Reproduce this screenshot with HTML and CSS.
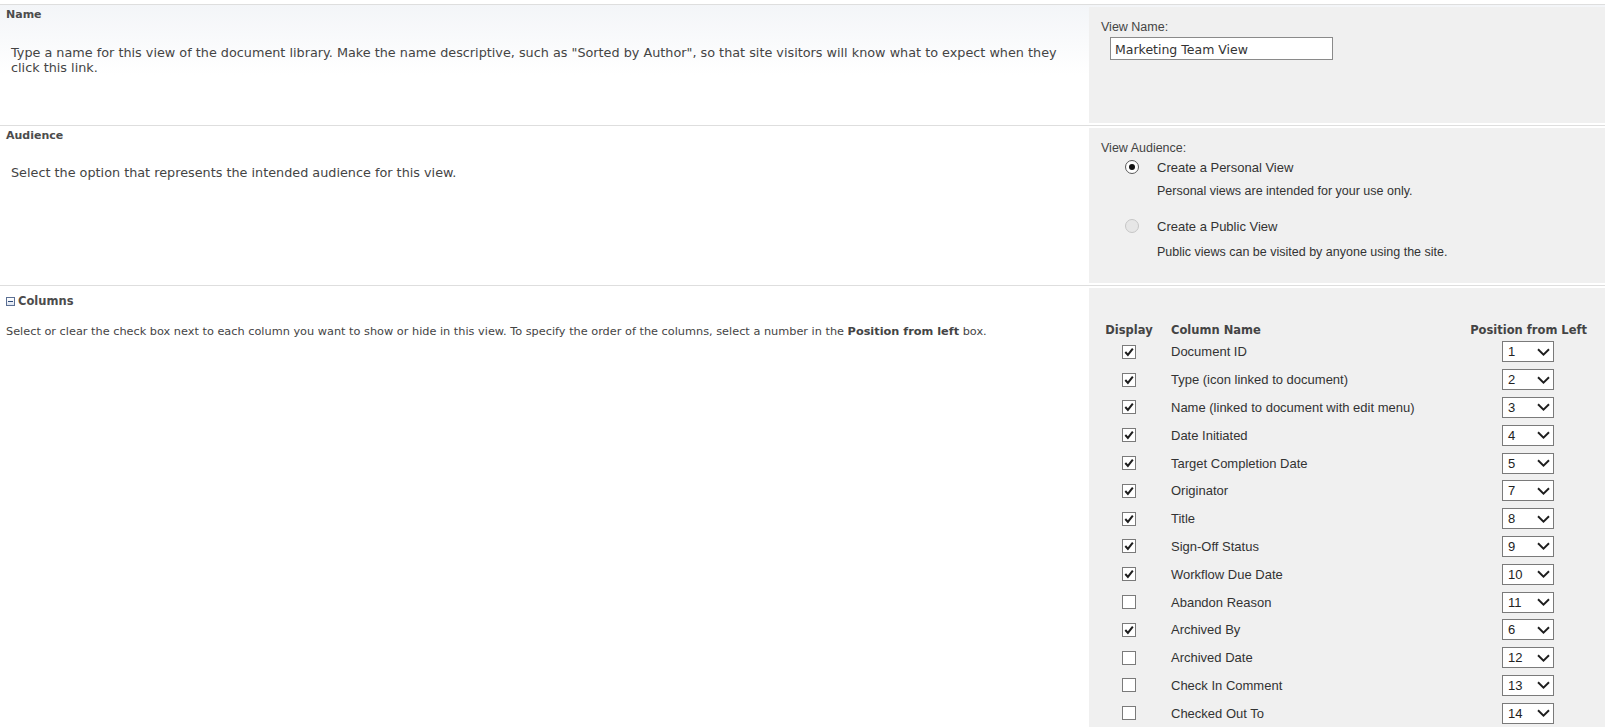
FILE: index.html
```html
<!DOCTYPE html>
<html lang="en">
<head>
    <meta charset="UTF-8">
    <title>Create View</title>
    <link rel="stylesheet" href="styles.css">
</head>
<body>

<div class="page">

    <!-- Name -->
    <div class="section section-first">
        <div class="section-desc">
            <h3 class="section-title">Name</h3>
            <p class="section-text text-name">Type a name for this view of the document library. Make the name descriptive, such as "Sorted by Author", so that site visitors will know what to expect when they click this link.</p>
        </div>
        <div class="section-ctrl ctrl-name">
            <div class="ctrl-label">View Name:</div>
            <input class="text-input" type="text" value="Marketing Team View">
        </div>
    </div>

    <!-- Audience -->
    <div class="section">
        <div class="section-desc">
            <h3 class="section-title">Audience</h3>
            <p class="section-text text-audience">Select the option that represents the intended audience for this view.</p>
        </div>
        <div class="section-ctrl ctrl-audience">
            <div class="ctrl-label">View Audience:</div>
            <div class="option">
                <span class="radio checked"></span>
                <span class="option-label">Create a Personal View</span>
            </div>
            <div class="option-note">Personal views are intended for your use only.</div>
            <div class="option option-second">
                <span class="radio disabled"></span>
                <span class="option-label">Create a Public View</span>
            </div>
            <div class="option-note note-second">Public views can be visited by anyone using the site.</div>
        </div>
    </div>

    <!-- Columns -->
    <div class="section section-last">
        <div class="section-desc">
            <h3 class="section-title title-columns"><span class="collapse-icon"></span>Columns</h3>
            <p class="section-text text-columns">Select or clear the check box next to each column you want to show or hide in this view. To specify the order of the columns, select a number in the <b>Position from left</b> box.</p>
        </div>
        <div class="section-ctrl ctrl-columns">
            <div class="col-grid">
                <div class="col-head head-display">Display</div>
                <div class="col-head head-name">Column Name</div>
                <div class="col-head head-pos">Position from Left</div>

                <div class="cell-check"><span class="check on"></span></div>
                <div class="cell-name">Document ID</div>
                <div class="cell-pos"><span class="pos-select">1</span></div>

                <div class="cell-check"><span class="check on"></span></div>
                <div class="cell-name">Type (icon linked to document)</div>
                <div class="cell-pos"><span class="pos-select">2</span></div>

                <div class="cell-check"><span class="check on"></span></div>
                <div class="cell-name">Name (linked to document with edit menu)</div>
                <div class="cell-pos"><span class="pos-select">3</span></div>

                <div class="cell-check"><span class="check on"></span></div>
                <div class="cell-name">Date Initiated</div>
                <div class="cell-pos"><span class="pos-select">4</span></div>

                <div class="cell-check"><span class="check on"></span></div>
                <div class="cell-name">Target Completion Date</div>
                <div class="cell-pos"><span class="pos-select">5</span></div>

                <div class="cell-check"><span class="check on"></span></div>
                <div class="cell-name">Originator</div>
                <div class="cell-pos"><span class="pos-select">7</span></div>

                <div class="cell-check"><span class="check on"></span></div>
                <div class="cell-name">Title</div>
                <div class="cell-pos"><span class="pos-select">8</span></div>

                <div class="cell-check"><span class="check on"></span></div>
                <div class="cell-name">Sign-Off Status</div>
                <div class="cell-pos"><span class="pos-select">9</span></div>

                <div class="cell-check"><span class="check on"></span></div>
                <div class="cell-name">Workflow Due Date</div>
                <div class="cell-pos"><span class="pos-select">10</span></div>

                <div class="cell-check"><span class="check"></span></div>
                <div class="cell-name">Abandon Reason</div>
                <div class="cell-pos"><span class="pos-select">11</span></div>

                <div class="cell-check"><span class="check on"></span></div>
                <div class="cell-name">Archived By</div>
                <div class="cell-pos"><span class="pos-select">6</span></div>

                <div class="cell-check"><span class="check"></span></div>
                <div class="cell-name">Archived Date</div>
                <div class="cell-pos"><span class="pos-select">12</span></div>

                <div class="cell-check"><span class="check"></span></div>
                <div class="cell-name">Check In Comment</div>
                <div class="cell-pos"><span class="pos-select">13</span></div>

                <div class="cell-check"><span class="check"></span></div>
                <div class="cell-name">Checked Out To</div>
                <div class="cell-pos"><span class="pos-select">14</span></div>
            </div>
        </div>
    </div>

</div>

<script>
    // checkmarks and dropdown arrows are the same everywhere, so add them here
    document.addEventListener('DOMContentLoaded', function () {
        const svgNS = 'http://www.w3.org/2000/svg';

        document.querySelectorAll('.check.on').forEach(box => {
            box.innerHTML = '<svg width="12" height="12" viewBox="0 0 12 12"><path d="M2.3 6 L4.9 8.9 L9.8 2.6" fill="none" stroke="#1e1e1e" stroke-width="2"/></svg>';
        });

        document.querySelectorAll('.pos-select').forEach(sel => {
            const arrow = document.createElementNS(svgNS, 'svg');
            arrow.setAttribute('class', 'pos-arrow');
            arrow.setAttribute('width', '13');
            arrow.setAttribute('height', '8');
            arrow.setAttribute('viewBox', '0 0 13 8');
            arrow.innerHTML = '<path d="M1 1.2 L6.5 6.6 L12 1.2" fill="none" stroke="#1e1e1e" stroke-width="1.9"/>';
            sel.appendChild(arrow);
        });
    });
</script>

</body>
</html>
```

FILE: styles.css
```css
:root {
    --text-color: #444444;
    --title-color: #4c4c4c;
    --ctrl-bg: #f0f0f0;
    --line-color: #dedede;
    --box-border: #7a7a7a;
    --verdana: "DejaVu Sans", Verdana, sans-serif;
    --arial: "Liberation Sans", Arial, sans-serif;
}

body {
    margin: 0;
    background: #ffffff;
    color: var(--text-color);
    font-family: var(--verdana);
}

.page {
    width: 1605px;
    padding-top: 4px;
}

.section {
    display: flex;
    border-top: 1px solid var(--line-color);
}

.section-first {
    background: linear-gradient(#f3f5f8, #ffffff 70px);
}

.section-desc {
    flex: 0 0 1089px;
}

.section-title {
    margin: 0;
    padding: 3px 6px 0;
    font-size: 11px;
    line-height: 14px;
    font-weight: bold;
    color: var(--title-color);
}

.section-text {
    margin: 0;
    font-size: 12.8px;
    line-height: 15px;
}

.text-name {
    margin-top: 23px;
    padding: 0 12px 0 11px;
}

.text-audience {
    margin-top: 22px;
    padding-left: 11px;
}

.title-columns {
    padding-top: 8px;
    font-size: 11.5px;
    display: flex;
    align-items: center;
}

.collapse-icon {
    width: 7px;
    height: 7px;
    border: 1px solid #5b6f93;
    background: linear-gradient(#ffffff, #dfe6f1);
    margin-right: 3px;
    position: relative;
}

.collapse-icon::after {
    content: '';
    position: absolute;
    left: 1px;
    right: 1px;
    top: 3px;
    height: 1px;
    background: #2d4a7a;
}

.text-columns {
    margin-top: 16px;
    padding-left: 6px;
    font-size: 11.3px;
}

.section-ctrl {
    flex: 1;
    background: var(--ctrl-bg);
    margin: 2px 0;
    padding: 13px 10px 0 12px;
    font-family: var(--arial);
    color: #333333;
}

.ctrl-name {
    height: 103px;
}

.ctrl-audience {
    height: 142px;
}

.ctrl-columns {
    margin-bottom: 0;
    padding-top: 35px;
    padding-bottom: 20px;
}

.ctrl-label {
    font-size: 12.5px;
    line-height: 15px;
    color: #444444;
}

.text-input {
    display: block;
    box-sizing: border-box;
    width: 223px;
    height: 23px;
    margin: 2px 0 0 9px;
    padding: 1px 4px 0;
    border: 1px solid #8a8a8a;
    background: #ffffff;
    font-family: var(--verdana);
    font-size: 12.5px;
    color: #333333;
    outline: none;
}

/* audience radios */

.option {
    display: flex;
    align-items: center;
    gap: 18px;
    padding-left: 24px;
    margin-top: 3px;
    height: 16px;
}

.option-second {
    margin-top: 19px;
}

.option-label {
    font-size: 13px;
}

.option-note {
    padding-left: 56px;
    margin-top: 9px;
    font-size: 12.5px;
    line-height: 15px;
}

.note-second {
    margin-top: 11px;
}

.radio {
    box-sizing: border-box;
    width: 14px;
    height: 14px;
    border-radius: 50%;
    background: #ffffff;
    position: relative;
}

.radio.checked {
    border: 1px solid #5a5a5a;
}

.radio.checked::after {
    content: '';
    position: absolute;
    left: 3px;
    top: 3px;
    width: 6px;
    height: 6px;
    border-radius: 50%;
    background: #111111;
}

.radio.disabled {
    border: 1px solid #c6c6c6;
    background: #e6e6e6;
}

/* columns table */

.col-grid {
    display: grid;
    grid-template-columns: 56px 1fr 130px;
    grid-auto-rows: 27.8px;
    grid-template-rows: 15px;
    align-items: center;
}

.col-head {
    font-family: var(--verdana);
    font-size: 11.5px;
    font-weight: bold;
    color: #444444;
    line-height: 15px;
}

.head-display {
    text-align: center;
}

.head-name {
    padding-left: 14px;
}

.head-pos {
    text-align: right;
    margin-right: 8px;
    white-space: nowrap;
}

.cell-check {
    display: flex;
    justify-content: center;
}

.check {
    box-sizing: border-box;
    width: 14px;
    height: 14px;
    border: 1px solid var(--box-border);
    background: #ffffff;
    display: flex;
    align-items: center;
    justify-content: center;
}

.cell-name {
    padding-left: 14px;
    font-size: 13px;
    color: #333333;
}

.cell-pos {
    padding-left: 37px;
}

.pos-select {
    box-sizing: border-box;
    width: 52px;
    height: 21px;
    border: 1px solid var(--box-border);
    background: #ffffff;
    display: flex;
    align-items: center;
    justify-content: space-between;
    padding: 0 3px 0 5px;
    font-size: 13px;
    color: #222222;
}

.pos-arrow {
    display: block;
}
```
